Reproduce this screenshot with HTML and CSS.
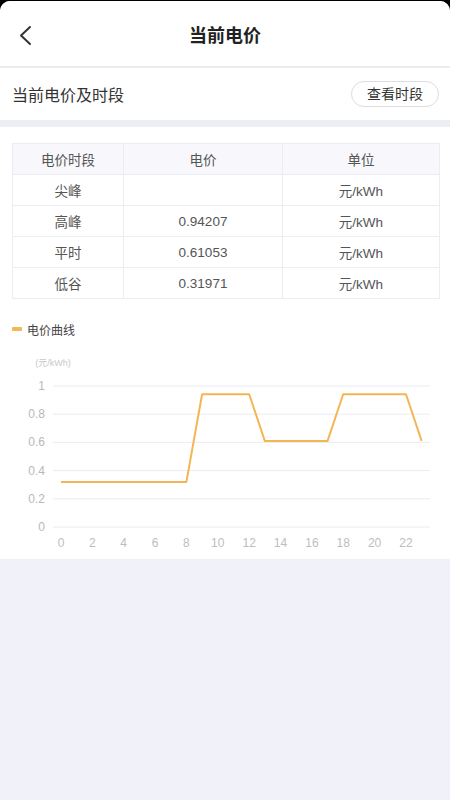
FILE: index.html
```html
<html lang="zh-CN">
<head>
    <meta charset="UTF-8">
    <meta name="viewport" content="width=device-width, initial-scale=1.0">
    <title>当前电价</title>
    <link rel="stylesheet" href="styles.css">
</head>
<body>
    <div class="screen">
        <div class="navbar">
            <svg class="back" width="20" height="24" viewBox="0 0 20 24">
                <path d="M14 3 L5 11.5 L14 20" fill="none" stroke="#333" stroke-width="2" stroke-linecap="round" stroke-linejoin="round"/>
            </svg>
            <div class="nav-title">当前电价</div>
        </div>

        <div class="section-head">
            <div class="section-title">当前电价及时段</div>
            <div class="pill-btn">查看时段</div>
        </div>

        <div class="content">
            <table class="price-table">
                <colgroup>
                    <col class="c1">
                    <col class="c2">
                    <col class="c3">
                </colgroup>
                <tr class="thead">
                    <td>电价时段</td>
                    <td>电价</td>
                    <td>单位</td>
                </tr>
                <tr>
                    <td>尖峰</td>
                    <td></td>
                    <td>元/kWh</td>
                </tr>
                <tr>
                    <td>高峰</td>
                    <td>0.94207</td>
                    <td>元/kWh</td>
                </tr>
                <tr>
                    <td>平时</td>
                    <td>0.61053</td>
                    <td>元/kWh</td>
                </tr>
                <tr>
                    <td>低谷</td>
                    <td>0.31971</td>
                    <td>元/kWh</td>
                </tr>
            </table>

            <div class="legend">
                <span class="swatch"></span>
                <span>电价曲线</span>
            </div>

            <!-- chart: y = 186 - value * 141, x = 61 + hour * 15.68 -->
            <svg class="chart" width="450" height="216" viewBox="0 0 450 216">
                <text class="unit" x="53" y="25">(元/kWh)</text>

                <g class="grid">
                    <line x1="53" y1="45" x2="430" y2="45"/>
                    <line x1="53" y1="73.2" x2="430" y2="73.2"/>
                    <line x1="53" y1="101.4" x2="430" y2="101.4"/>
                    <line x1="53" y1="129.6" x2="430" y2="129.6"/>
                    <line x1="53" y1="157.8" x2="430" y2="157.8"/>
                    <line x1="53" y1="186" x2="430" y2="186"/>
                </g>

                <g class="ylab">
                    <text x="45" y="49">1</text>
                    <text x="45" y="77.2">0.8</text>
                    <text x="45" y="105.4">0.6</text>
                    <text x="45" y="133.6">0.4</text>
                    <text x="45" y="161.8">0.2</text>
                    <text x="45" y="190">0</text>
                </g>

                <g class="xlab">
                    <text x="61" y="206">0</text>
                    <text x="92.4" y="206">2</text>
                    <text x="123.7" y="206">4</text>
                    <text x="155.1" y="206">6</text>
                    <text x="186.4" y="206">8</text>
                    <text x="217.8" y="206">10</text>
                    <text x="249.2" y="206">12</text>
                    <text x="280.5" y="206">14</text>
                    <text x="311.9" y="206">16</text>
                    <text x="343.2" y="206">18</text>
                    <text x="374.6" y="206">20</text>
                    <text x="406" y="206">22</text>
                </g>

                <polyline class="line" points="61,140.9 186.4,140.9 202.1,53.2 249.2,53.2 264.8,99.9 327.6,99.9 343.2,53.2 406,53.2 421.6,99.9"/>
            </svg>
        </div>

        <div class="filler"></div>
    </div>
</body>
</html>
```

FILE: styles.css
```css
html, body {
    margin: 0;
    padding: 0;
    background: #000;
}

body {
    font-family: "Liberation Sans", "Noto Sans CJK SC", sans-serif;
    color: #333;
}

.screen {
    margin-top: 1px;
    height: 799px;
    background: #f1f1fa;
    border-radius: 10px 10px 0 0;
    overflow: hidden;
    display: flex;
    flex-direction: column;
}

.navbar {
    height: 65px;
    background: #fff;
    border-bottom: 2px solid #ececf2;
    display: flex;
    align-items: center;
    justify-content: center;
    position: relative;
}

.back {
    position: absolute;
    left: 16px;
    top: 23px;
}

.nav-title {
    font-size: 18px;
    font-weight: bold;
    color: #222;
}

.section-head {
    height: 52px;
    background: #fff;
    display: flex;
    align-items: center;
    justify-content: space-between;
    padding: 0 11px 0 12px;
    border-bottom: 7px solid #ededf4;
}

.section-title {
    font-size: 16px;
    color: #333;
}

.pill-btn {
    height: 24px;
    line-height: 24px;
    padding: 0 15px;
    border: 1px solid #dcdce2;
    border-radius: 13px;
    font-size: 14px;
    color: #333;
}

.content {
    background: #fff;
    padding: 16px 0 2px;
}

.price-table {
    margin: 0 11px 0 12px;
    width: 427px;
    border-collapse: collapse;
    table-layout: fixed;
    font-size: 13.5px;
    color: #555;
}

.c1 { width: 111px; }
.c2 { width: 159px; }
.c3 { width: 157px; }

.price-table td {
    height: 31px;
    border: 1px solid #ececf3;
    text-align: center;
    padding: 0;
}

.thead td {
    background: #f8f8fc;
}

.legend {
    margin: 22px 0 0 12px;
    height: 16px;
    display: flex;
    align-items: center;
    gap: 5px;
    font-size: 12px;
    color: #444;
}

.swatch {
    width: 10px;
    height: 4px;
    border-radius: 1px;
    background: #f4b756;
}

.chart {
    display: block;
    margin-top: 4px;
}

.unit {
    font-size: 9px;
    fill: #c8c8cc;
    text-anchor: middle;
}

.grid line {
    stroke: #ececf0;
    stroke-width: 1;
}

.ylab text {
    font-size: 12px;
    fill: #b8b8bc;
    text-anchor: end;
}

.xlab text {
    font-size: 12px;
    fill: #bdbdc1;
    text-anchor: middle;
}

.line {
    fill: none;
    stroke: #f4b654;
    stroke-width: 2;
    stroke-linejoin: round;
}

.filler {
    flex: 1;
}
```
